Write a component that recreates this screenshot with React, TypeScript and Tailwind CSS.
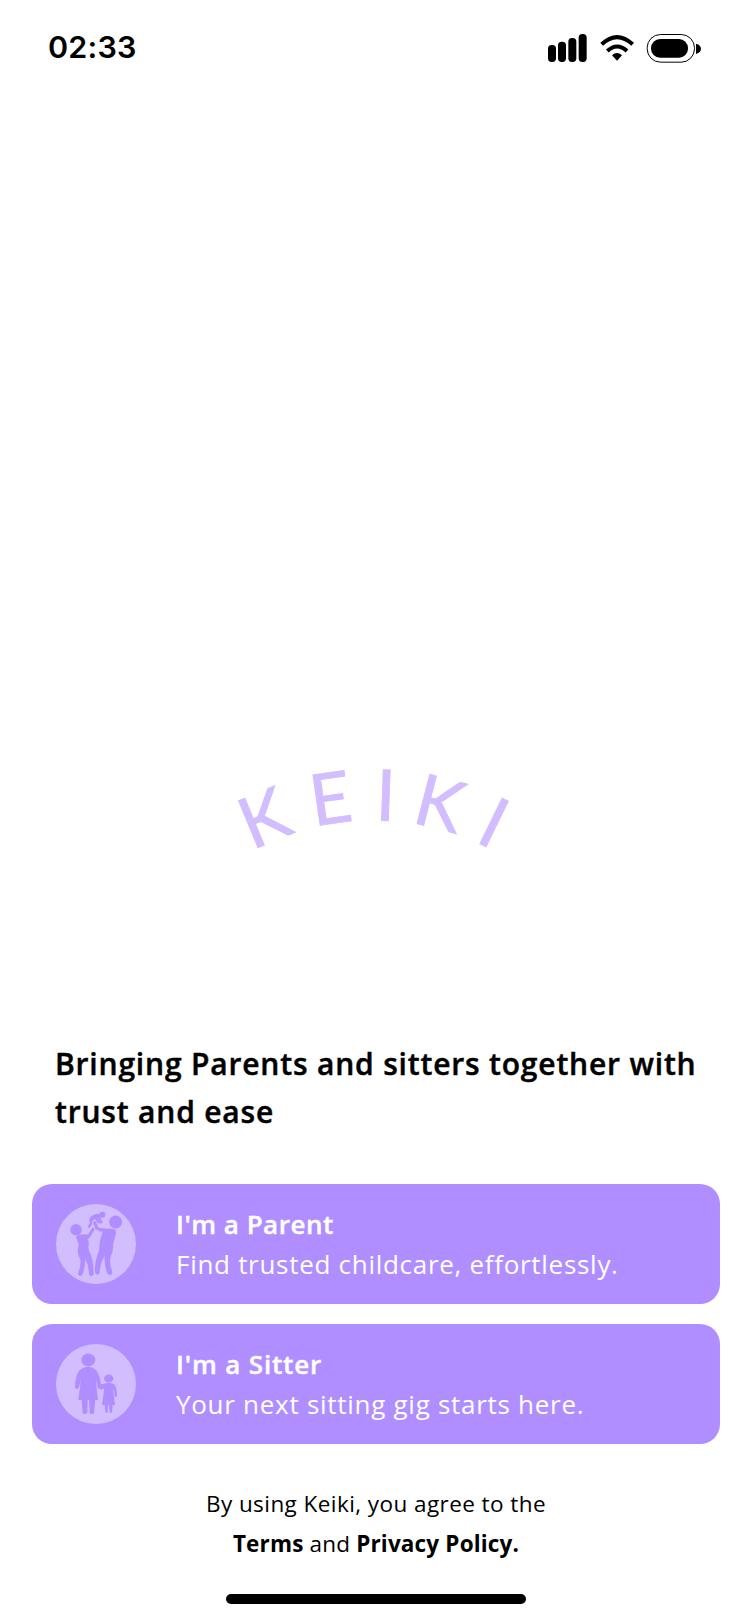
import type { ReactNode } from "react";

function StatusBar() {
  return (
    <header className="flex h-24 items-center justify-between pl-12 pr-12">
      <span className="mb-[1px] font-['Inter',sans-serif] text-[30.5px] leading-none font-semibold tracking-[0.2px]">02:33</span>
      <svg className="h-[60px] w-[190px] -mr-[18px] mt-1" viewBox="0 0 570 180" aria-hidden="true">
        <rect x="54" y="75" width="24" height="51" rx="11" />
        <rect x="84" y="65" width="24" height="61" rx="11" />
        <rect x="115" y="54" width="24" height="72" rx="11" />
        <rect x="146" y="42" width="24" height="84" rx="11" />
        <g fill="none" stroke="#000" strokeWidth="12">
          <path d="M215 73Q261 30 308 73" />
          <path d="M232 93Q261 66 291 93" />
        </g>
        <path d="M246 106Q261 92 276 106L261 122Z" />
        <rect x="351.5" y="43.5" width="142" height="83" rx="40" fill="none" stroke="#000" strokeWidth="3" />
        <rect x="363" y="57" width="111" height="56" rx="27" />
        <path d="M498 71Q513 75 513 86.500Q513 98 498 102Z" />
      </svg>
    </header>
  );
}

const letters = [
  { ch: "K", x: 258.3, y: 847.7, r: -22.5, dx: -6.7 },
  { ch: "E", x: 320.3, y: 825.3, r: -8.2, dx: -6.7 },
  { ch: "I", x: 381.6, y: 820.5, r: 2, dx: -6.7 },
  { ch: "K", x: 417.2, y: 823.7, r: 14.5, dx: -6.7 },
  { ch: "I", x: 480, y: 844, r: 26, dx: -6.7 },
];

function Logo() {
  return (
    <svg className="mx-auto mt-[634px] block h-[150px] w-[350px]" viewBox="200 730 350 150" role="img">
      {letters.map((l, i) => (
        <text
          key={i}
          transform={`translate(${l.x} ${l.y}) rotate(${l.r})`}
          x={l.dx}
          y={0}
          fill="#d2bdff"
          stroke="#d2bdff"
          strokeWidth={0.9}
          className="font-['Lato',sans-serif] text-[71px] leading-none"
        >
          {l.ch}
        </text>
      ))}
    </svg>
  );
}

function ParentIcon() {
  return (
    <svg className="size-20 shrink-0" viewBox="18 27 240 240" aria-hidden="true">
      <circle cx="138" cy="147" r="120" fill="#d2bdff" />
      <g fill="#b08eff">
        <circle cx="78" cy="104" r="17" />
        <circle cx="197" cy="81" r="19.500" />
        <ellipse cx="157" cy="59" rx="9" ry="8.500" />
        <path d="M79 123Q84 118 118 119L119 128L113 133Q119 144 115 156Q116 170 123 180Q132 208 131 236Q130 243 124 243Q117 243 117 236Q117 212 106 193Q105 220 97 239Q94 244 88 242Q83 240 84 235Q94 212 91 194Q83 178 83 168L86 148Q84 140 80 132Q77 127 79 123Z" />
        <path d="M148 100L191 102Q199 105 198 114L190 145Q190 170 182 184Q177 206 187 230Q188 237 181 240Q175 240 172 235Q162 211 164 183Q150 206 149 233Q147 239 141 239Q135 238 135 231Q133 199 147 168Q147 138 158 108L148 109Z" />
      </g>
      <g fill="none" stroke="#b08eff" strokeLinecap="round" strokeLinejoin="round">
        <path strokeWidth="9" d="M90 124L117 123L129 103" />
        <path strokeWidth="9" d="M134 83L140 99L149 104L165 105" />
        <path strokeWidth="12" d="M149 64Q134 61 125 72" />
        <path strokeWidth="7" d="M122 74L123 86L117 95M147 69L154 82M138 70L146 82" />
      </g>
    </svg>
  );
}

function SitterIcon() {
  return (
    <svg className="size-20 shrink-0" viewBox="18 27 240 240" aria-hidden="true">
      <circle cx="138" cy="147" r="120" fill="#d2bdff" />
      <g fill="#b08eff">
        <ellipse cx="115" cy="75" rx="21" ry="19.500" />
        <path d="M115 95Q133 96 142 110Q151 126 153 148L163 147L164 155Q156 164 146 161Q142 158 142 149L137 133L144 195H136L132 233Q131 237 126 237Q119 237 119 233L117 195H113L112 233Q110 237 105 237Q99 237 98 233L95 195H85L93 133L87 157Q86 162 80 162Q75 161 75 156Q75 129 86 109Q97 96 115 95Z" />
        <ellipse cx="176" cy="130.500" rx="14" ry="12" />
        <path d="M176 143Q189 143 195 151Q201 162 201 184Q198 188 194 184L193 170L189 162L195 210H188L186 232Q182 236 179 232L177 210H174L173 232Q170 236 166 232L164 210H156L163 160L158 163Q150 164 147 158L149 151Q158 149 163 146Q169 143 176 143Z" />
      </g>
    </svg>
  );
}

type RoleProps = { icon: ReactNode; title: ReactNode; text: ReactNode };

function RoleCard({ icon, title, text }: RoleProps) {
  return (
    <button className="flex h-[120px] w-full items-center gap-10 rounded-[20px] bg-[#b08eff] px-6 text-left text-[26px] leading-10 whitespace-nowrap text-white">
      {icon}
      <span className="flex flex-col">
        {title}
        {text}
      </span>
    </button>
  );
}

export default function App() {
  return (
    <div className="flex h-[1624px] w-[750px] flex-col overflow-hidden bg-white font-['Open_Sans',sans-serif] text-black">
      <StatusBar />
      <Logo />
      <h1 className="mt-[160px] pl-[55px] text-[30px] leading-[48px] font-semibold tracking-[0.82px] whitespace-nowrap [-webkit-text-stroke:0.45px_black]">
        Bringing Parents and sitters together with
        <br />
        trust and ease
      </h1>
      <main className="mt-[48px] flex flex-col gap-5 pr-[30px] pl-8">
        <RoleCard
          icon={<ParentIcon />}
          title={<span className="font-semibold tracking-[0.5px] [-webkit-text-stroke:0.4px_white]">I'm a Parent</span>}
          text={<span className="tracking-[0.71px]">Find trusted childcare, effortlessly.</span>}
        />
        <RoleCard
          icon={<SitterIcon />}
          title={<span className="font-semibold tracking-[0.85px] [-webkit-text-stroke:0.4px_white]">I'm a Sitter</span>}
          text={<span className="tracking-[0.72px]">Your next sitting gig starts here.</span>}
        />
      </main>
      <footer className="mt-10 flex flex-1 flex-col items-center pl-[2px] text-[22.5px] leading-10">
        <p className="tracking-[0.43px]">By using Keiki, you agree to the</p>
        <p className="tracking-[0.17px]">
          <b>Terms</b> and <b>Privacy Policy.</b>
        </p>
        <div className="mt-[30px] h-2.5 w-[300px] rounded-full bg-black" />
      </footer>
    </div>
  );
}
